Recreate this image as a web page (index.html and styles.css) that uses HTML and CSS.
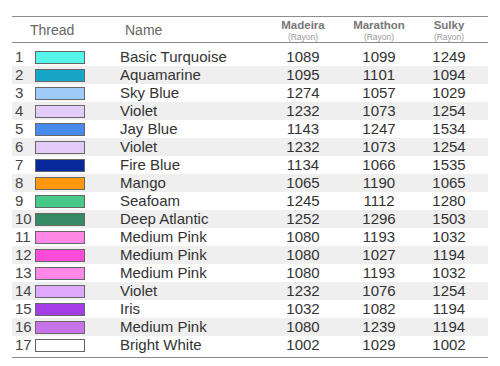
FILE: index.html
```html
<!DOCTYPE html>
<html lang="en">
<head>
  <meta charset="UTF-8">
  <title>Thread Chart</title>
  <link rel="stylesheet" href="styles.css">
</head>
<body>
  <div class="chart">
    <div class="chart-head">
      <div class="th th-thread">Thread</div>
      <div class="th th-name">Name</div>
      <div class="th th-brand"><b>Madeira</b><small>(Rayon)</small></div>
      <div class="th th-brand"><b>Marathon</b><small>(Rayon)</small></div>
      <div class="th th-brand"><b>Sulky</b><small>(Rayon)</small></div>
    </div>
    <div class="chart-body">
      <div class="row"><span class="num">1</span><span class="swatch" style="background:#55f3e9"></span><span class="name">Basic Turquoise</span><span class="code">1089</span><span class="code">1099</span><span class="code">1249</span></div>
      <div class="row"><span class="num">2</span><span class="swatch" style="background:#17a6c7"></span><span class="name">Aquamarine</span><span class="code">1095</span><span class="code">1101</span><span class="code">1094</span></div>
      <div class="row"><span class="num">3</span><span class="swatch" style="background:#9fcbf9"></span><span class="name">Sky Blue</span><span class="code">1274</span><span class="code">1057</span><span class="code">1029</span></div>
      <div class="row"><span class="num">4</span><span class="swatch" style="background:#e3cbfa"></span><span class="name">Violet</span><span class="code">1232</span><span class="code">1073</span><span class="code">1254</span></div>
      <div class="row"><span class="num">5</span><span class="swatch" style="background:#488bef"></span><span class="name">Jay Blue</span><span class="code">1143</span><span class="code">1247</span><span class="code">1534</span></div>
      <div class="row"><span class="num">6</span><span class="swatch" style="background:#e3cbfa"></span><span class="name">Violet</span><span class="code">1232</span><span class="code">1073</span><span class="code">1254</span></div>
      <div class="row"><span class="num">7</span><span class="swatch" style="background:#08299c"></span><span class="name">Fire Blue</span><span class="code">1134</span><span class="code">1066</span><span class="code">1535</span></div>
      <div class="row"><span class="num">8</span><span class="swatch" style="background:#ff980c"></span><span class="name">Mango</span><span class="code">1065</span><span class="code">1190</span><span class="code">1065</span></div>
      <div class="row"><span class="num">9</span><span class="swatch" style="background:#47c98a"></span><span class="name">Seafoam</span><span class="code">1245</span><span class="code">1112</span><span class="code">1280</span></div>
      <div class="row"><span class="num">10</span><span class="swatch" style="background:#368a64"></span><span class="name">Deep Atlantic</span><span class="code">1252</span><span class="code">1296</span><span class="code">1503</span></div>
      <div class="row"><span class="num">11</span><span class="swatch" style="background:#ff88e6"></span><span class="name">Medium Pink</span><span class="code">1080</span><span class="code">1193</span><span class="code">1032</span></div>
      <div class="row"><span class="num">12</span><span class="swatch" style="background:#ff4bd9"></span><span class="name">Medium Pink</span><span class="code">1080</span><span class="code">1027</span><span class="code">1194</span></div>
      <div class="row"><span class="num">13</span><span class="swatch" style="background:#ff88e6"></span><span class="name">Medium Pink</span><span class="code">1080</span><span class="code">1193</span><span class="code">1032</span></div>
      <div class="row"><span class="num">14</span><span class="swatch" style="background:#e0a8fa"></span><span class="name">Violet</span><span class="code">1232</span><span class="code">1076</span><span class="code">1254</span></div>
      <div class="row"><span class="num">15</span><span class="swatch" style="background:#a53de6"></span><span class="name">Iris</span><span class="code">1032</span><span class="code">1082</span><span class="code">1194</span></div>
      <div class="row"><span class="num">16</span><span class="swatch" style="background:#c872ea"></span><span class="name">Medium Pink</span><span class="code">1080</span><span class="code">1239</span><span class="code">1194</span></div>
      <div class="row"><span class="num">17</span><span class="swatch" style="background:#ffffff"></span><span class="name">Bright White</span><span class="code">1002</span><span class="code">1029</span><span class="code">1002</span></div>
    </div>
  </div>
</body>
</html>
```

FILE: styles.css
```css
* {
  margin: 0;
  padding: 0;
  box-sizing: border-box;
}

body {
  font-family: 'Liberation Sans', Arial, sans-serif;
  background: #ffffff;
  color: #333333;
  padding: 16px 12px;
}

.chart {
  width: 476px;
}

.chart-head,
.row {
  display: grid;
  grid-template-columns: 23px 50px 35px 146px 74px 78px 62px 8px;
}

.chart-head {
  height: 27px;
  border-top: 1px solid #8c8c8c;
  border-bottom: 1px solid #8c8c8c;
  align-items: center;
  color: #666666;
}

.th {
  font-size: 14px;
}

.th-thread {
  grid-column: 1 / 3;
  padding-left: 18px;
  padding-top: 1px;
}

.th-name {
  grid-column: 4;
  padding-left: 5px;
  padding-top: 1px;
}

.th-brand {
  display: flex;
  flex-direction: column;
  align-items: center;
  line-height: 1;
  padding-top: 2px;
}

.th-brand b {
  font-size: 11.5px;
  color: #777777;
}

.th-brand small {
  font-size: 8.5px;
  color: #999999;
  margin-top: 1px;
}

.chart-body {
  padding: 5px 0 3px;
  border-bottom: 1px solid #8c8c8c;
}

.row {
  height: 18px;
  align-items: center;
  font-size: 15px;
  line-height: 18px;
}

.row:nth-child(even) {
  background: #efefef;
}

.num {
  padding-left: 3px;
  color: #444444;
}

.swatch {
  height: 13px;
  border: 1px solid #666666;
}

.name {
  grid-column: 4;
}

.code {
  text-align: center;
}
```
